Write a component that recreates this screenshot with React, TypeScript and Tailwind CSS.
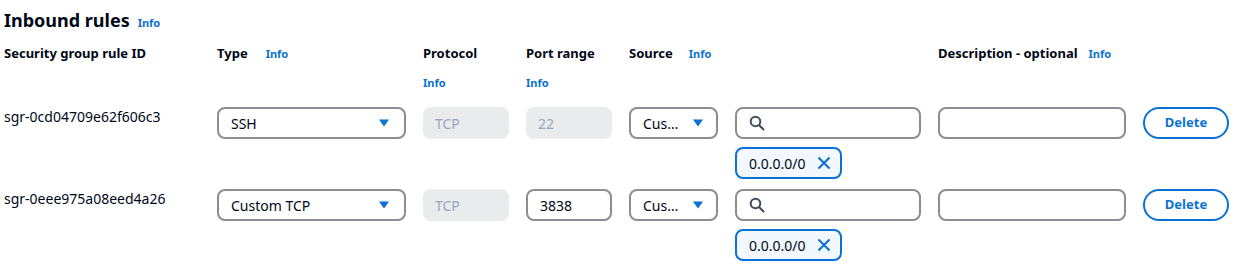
import React from 'react';

const font = { fontFamily: '"Noto Sans", "Open Sans", Arial, sans-serif' };

const Info = ({ className = '' }: { className?: string }) => (
  <span className={`text-[11px] font-bold text-[#0972d3] ${className}`}>Info</span>
);

const Caret = () => (
  <svg width="12" height="10" viewBox="0 0 12 10" className="shrink-0">
    <path d="M1 1.5h10L6 8.5z" fill="#0972d3" />
  </svg>
);

const SearchIcon = () => (
  <svg width="16" height="16" viewBox="0 0 16 16" fill="none" stroke="#414d5c" strokeWidth="2">
    <circle cx="6.5" cy="6.5" r="4.8" />
    <path d="M10 10l4.5 4.5" strokeLinecap="round" />
  </svg>
);

const CloseIcon = () => (
  <svg width="16" height="16" viewBox="0 0 16 16" fill="none" stroke="#0972d3" strokeWidth="2">
    <path d="M2.5 2.5l11 11M13.5 2.5l-11 11" />
  </svg>
);

interface Rule {
  id: string;
  type: string;
  port: string;
  portDisabled: boolean;
}

const rules: Rule[] = [
  { id: 'sgr-0cd04709e62f606c3', type: 'SSH', port: '22', portDisabled: true },
  { id: 'sgr-0eee975a08eed4a26', type: 'Custom TCP', port: '3838', portDisabled: false },
];

const box = 'h-[32px] rounded-[8px] border-2 border-[#8c8c94] bg-white flex items-center';
const disabledBox = 'h-[32px] rounded-[8px] bg-[#e9ebed] flex items-center px-[12px] text-[#9ba7b6]';

const RuleRow = ({ rule }: { rule: Rule }) => (
  <>
    <div className="text-[14px] leading-[20px] text-[#000716]">{rule.id}</div>
    <div className={`${box} justify-between pl-[12px] pr-[14px]`}>
      <span>{rule.type}</span>
      <Caret />
    </div>
    <div className={disabledBox}>TCP</div>
    {rule.portDisabled ? (
      <div className={disabledBox}>{rule.port}</div>
    ) : (
      <div className={`${box} px-[12px]`}>{rule.port}</div>
    )}
    <div className={`${box} justify-between pl-[12px] pr-[12px]`}>
      <span>Cus…</span>
      <Caret />
    </div>
    <div className="flex flex-col items-start gap-[8px]">
      <div className={`${box} w-full px-[12px]`}>
        <SearchIcon />
      </div>
      <div className="h-[32px] rounded-[8px] border-2 border-[#0972d3] bg-[#f2f8fd] flex items-center gap-[10px] pl-[12px] pr-[8px]">
        <span>0.0.0.0/0</span>
        <CloseIcon />
      </div>
    </div>
    <div className={box} />
    <button className="h-[32px] rounded-full border-2 border-[#0972d3] text-[#0972d3] font-bold text-[13px] flex items-center justify-center">
      Delete
    </button>
  </>
);

export default function App() {
  return (
    <div className="w-[1236px] h-[275px] bg-white px-[4px] text-[14px] text-[#000716]" style={font}>
      <div className="flex items-baseline gap-[8px] pt-[7px]">
        <h2 className="text-[18px] font-bold leading-[26px] text-[#000716]">Inbound rules</h2>
        <Info />
      </div>
      <div className="grid grid-cols-[196px_189px_86px_86px_89px_186px_188px_86px] gap-x-[17px] mt-[11px] text-[13px]">
        <div className="font-bold">Security group rule ID</div>
        <div className="font-bold flex items-baseline gap-[18px]">
          Type <Info />
        </div>
        <div className="flex flex-col">
          <span className="font-bold">Protocol</span>
          <Info className="mt-[11px]" />
        </div>
        <div className="flex flex-col">
          <span className="font-bold">Port range</span>
          <Info className="mt-[11px]" />
        </div>
        <div className="font-bold flex items-baseline gap-[16px] col-span-2">
          Source <Info />
        </div>
        <div className="font-bold flex items-baseline gap-[11px] col-span-2 whitespace-nowrap">
          Description - optional <Info />
        </div>
      </div>
      <div className="grid grid-cols-[196px_189px_86px_86px_89px_186px_188px_86px] gap-x-[17px] gap-y-[10px] mt-[16px] items-start">
        {rules.map((r) => (
          <RuleRow key={r.id} rule={r} />
        ))}
      </div>
    </div>
  );
}
